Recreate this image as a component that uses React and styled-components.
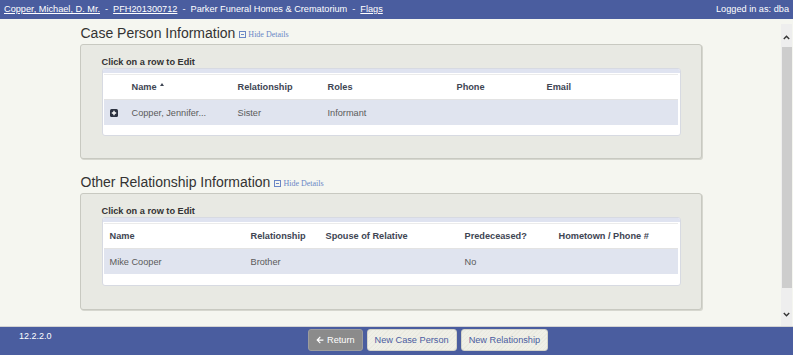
import React from "react";
import styled, { createGlobalStyle } from "styled-components";
import { FaArrowLeft } from "react-icons/fa";

const GlobalStyle = createGlobalStyle`
  html, body {
    margin: 0;
    padding: 0;
  }
  body {
    font-family: "Liberation Sans", Arial, sans-serif;
    background: #f5f6f0;
  }
  * {
    box-sizing: border-box;
  }
`;

const Page = styled.div`
  display: flex;
  flex-direction: column;
  width: 793px;
  height: 355px;
  overflow: hidden;
  background: #f5f6f0;
`;
const TopBar = styled.header`
  height: 19px;
  display: flex;
  justify-content: space-between;
  align-items: center;
  padding: 0 4px;
  background: #4a5d9f;
  color: #fff;
  font-size: 9.2px;
  line-height: 19px;
`;
const Crumbs = styled.div`
  display: flex;
  align-items: center;
`;
const Crumb = styled.span`
  text-decoration: ${(p) => (p.$link ? "underline" : "none")};
  cursor: ${(p) => (p.$link ? "pointer" : "default")};
`;
const Sep = styled.span`
  padding: 0 5px;
`;
const Main = styled.div`
  flex: 1;
  display: flex;
  min-height: 0;
`;
const Content = styled.main`
  flex: 1;
  overflow: hidden;
`;
const Column = styled.div`
  width: 622px;
  margin: 0 auto;
  padding-top: 6px;
`;
const Heading = styled.h2`
  height: 17px;
  margin: ${(p) => (p.$first ? "0" : "15px")} 0 2px 1px;
  display: flex;
  align-items: baseline;
  font-size: 14px;
  line-height: 17px;
  font-weight: normal;
  color: #333;
`;
const HideLink = styled.span`
  margin-left: 4px;
  display: inline-flex;
  align-items: center;
  gap: 2px;
  font-family: "Liberation Serif", "Times New Roman", serif;
  font-size: 8px;
  line-height: 10px;
  color: #6a86c6;
  cursor: pointer;
`;
const Panel = styled.section`
  padding: 12px 20px ${(p) => p.$pb || "22px"} 21px;
  background: #e8e9e3;
  border: 1px solid #c8c9c1;
  border-radius: 3px;
  box-shadow: 1px 1px 0 #d6d7cf;
`;
const Label = styled.div`
  font-size: 9.2px;
  line-height: 11px;
  font-weight: bold;
  color: #333;
`;
const Table = styled.div`
  padding: 0 2px ${(p) => p.$pb || "10px"} 1px;
  background: #fff;
  border: 1px solid #d7dae2;
  border-radius: 3px;
  overflow: hidden;
`;
const Strip = styled.div`
  height: 4px;
  margin: 0 -2px 1px -1px;
  background: #dfe3f0;
`;
const Row = styled.div`
  display: grid;
  grid-template-columns: ${(p) => p.$cols};
  align-items: center;
  height: 25px;
  padding-left: 6px;
  font-size: 9.2px;
  white-space: nowrap;
`;
const HeadRow = styled(Row)`
  height: 26px;
  border-top: 1px solid #ebebeb;
  border-bottom: 1px solid #e3e3e3;
  font-weight: bold;
  color: #3e4553;
`;
const DataRow = styled(Row)`
  background: #e0e4ef;
  color: #5b5b5b;
  cursor: pointer;
`;
const SortUp = styled.span`
  display: inline-block;
  margin-left: 3px;
  vertical-align: 4px;
  border-left: 2.5px solid transparent;
  border-right: 2.5px solid transparent;
  border-bottom: 3px solid #3e4553;
`;
const Scrollbar = styled.div`
  width: 11px;
  margin: 5px 1px 0 0;
  display: flex;
  flex-direction: column;
  background: #eeeeee;
`;
const ArrowBox = styled.div`
  height: 23px;
  display: flex;
  justify-content: center;
  align-items: ${(p) => (p.$up ? "flex-end" : "center")};
  padding-bottom: ${(p) => (p.$up ? "7px" : "0")};
`;
const Thumb = styled.div`
  height: 241px;
  margin-left: 1px;
  background: #cdcdcd;
`;
const Spacer = styled.div`
  flex: 1;
`;
const Footer = styled.footer`
  height: 29px;
  display: flex;
  align-items: flex-start;
  padding-left: 19px;
  border-top: 1px solid #d3d3d3;
  background: #4a5d9f;
`;
const Version = styled.div`
  width: 289px;
  padding-top: 4px;
  font-size: 9px;
  color: #fff;
`;
const Buttons = styled.div`
  display: flex;
  gap: 4px;
  padding-top: 2px;
`;
const Button = styled.button`
  height: 22px;
  padding: 0 7px;
  display: flex;
  align-items: center;
  gap: 3px;
  font-family: "Liberation Sans", Arial, sans-serif;
  font-size: 9.2px;
  border-radius: 3px;
  cursor: pointer;
  color: ${(p) => (p.$muted ? "#fff" : "#4a5ca0")};
  border: 1px solid ${(p) => (p.$muted ? "#9d9d9d" : "#d3d3c9")};
  background: ${(p) =>
    p.$muted
      ? "#8b8b8b"
      : "repeating-linear-gradient(135deg, #efefe7 0 2px, #e9e9e0 2px 3px)"};
`;

const PlusBox = () => (
  <svg width="8" height="8" viewBox="0 0 8 8">
    <rect width="8" height="8" rx="1.5" fill="#2c3241" />
    <path d="M4 1.8v4.4M1.8 4h4.4" stroke="#fff" strokeWidth="1.4" />
  </svg>
);

const MinusBox = () => (
  <svg width="7" height="7" viewBox="0 0 7 7">
    <rect x="0.5" y="0.5" width="6" height="6" fill="none" stroke="#6a86c6" />
    <path d="M2 3.5h3" stroke="#6a86c6" />
  </svg>
);

const Chevron = ({ up }) => (
  <svg width="7" height="5" viewBox="0 0 7 5">
    <polyline
      points={up ? "0.8,4 3.5,1.3 6.2,4" : "0.8,1 3.5,3.7 6.2,1"}
      fill="none"
      stroke="#333"
      strokeWidth="1.4"
    />
  </svg>
);

const personCols = "22px 106px 90px 129px 90px 1fr";
const otherCols = "141px 75px 139px 94px 1fr";

const Section = ({ title, first, panelPad, tablePad, children }) => (
  <>
    <Heading $first={first}>
      {title}
      <HideLink>
        <MinusBox />
        Hide Details
      </HideLink>
    </Heading>
    <Panel $pb={panelPad}>
      <Label>Click on a row to Edit</Label>
      <Table $pb={tablePad}>
        <Strip />
        {children}
      </Table>
    </Panel>
  </>
);

export default function App() {
  return (
    <Page>
      <GlobalStyle />
      <TopBar>
        <Crumbs>
          <Crumb $link>Copper, Michael, D. Mr.</Crumb>
          <Sep>-</Sep>
          <Crumb $link>PFH201300712</Crumb>
          <Sep>-</Sep>
          <Crumb>Parker Funeral Homes &amp; Crematorium</Crumb>
          <Sep>-</Sep>
          <Crumb $link>Flags</Crumb>
        </Crumbs>
        <span>Logged in as: dba</span>
      </TopBar>
      <Main>
        <Content>
          <Column>
            <Section title="Case Person Information" first>
              <HeadRow $cols={personCols}>
                <span />
                <span>
                  Name
                  <SortUp />
                </span>
                <span>Relationship</span>
                <span>Roles</span>
                <span>Phone</span>
                <span>Email</span>
              </HeadRow>
              <DataRow $cols={personCols}>
                <PlusBox />
                <span>Copper, Jennifer...</span>
                <span>Sister</span>
                <span>Informant</span>
                <span />
                <span />
              </DataRow>
            </Section>
            <Section
              title="Other Relationship Information"
              panelPad="23px"
              tablePad="11px"
            >
              <HeadRow $cols={otherCols}>
                <span>Name</span>
                <span>Relationship</span>
                <span>Spouse of Relative</span>
                <span>Predeceased?</span>
                <span>Hometown / Phone #</span>
              </HeadRow>
              <DataRow $cols={otherCols}>
                <span>Mike Cooper</span>
                <span>Brother</span>
                <span />
                <span>No</span>
                <span />
              </DataRow>
            </Section>
          </Column>
        </Content>
        <Scrollbar>
          <ArrowBox $up>
            <Chevron up />
          </ArrowBox>
          <Thumb />
          <Spacer />
          <ArrowBox>
            <Chevron />
          </ArrowBox>
        </Scrollbar>
      </Main>
      <Footer>
        <Version>12.2.2.0</Version>
        <Buttons>
          <Button $muted>
            <FaArrowLeft size={8} />
            Return
          </Button>
          <Button>New Case Person</Button>
          <Button>New Relationship</Button>
        </Buttons>
      </Footer>
    </Page>
  );
}
